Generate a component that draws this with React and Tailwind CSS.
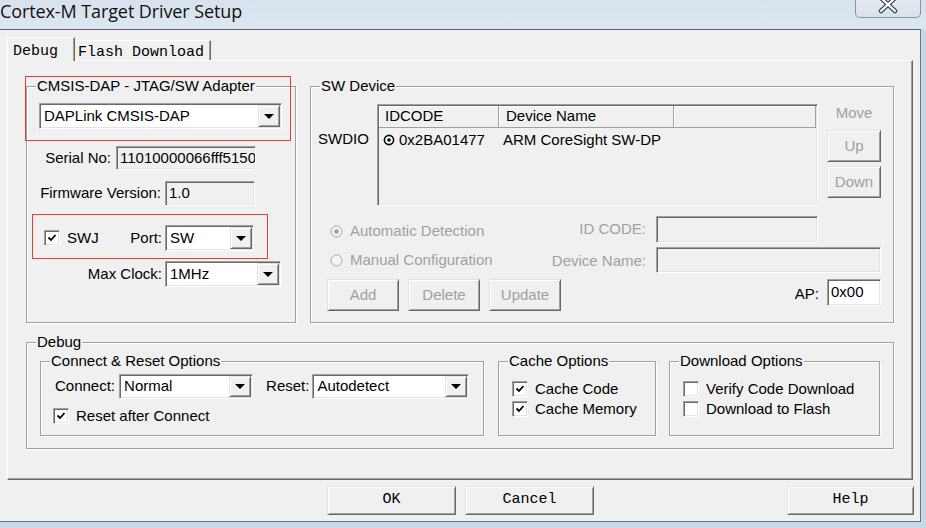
import React from "react";

const sunken =
  "border border-t-[#a0a0a0] border-l-[#a0a0a0] border-r-[#ffffff] border-b-[#ffffff] shadow-[inset_1px_1px_0_#696969,inset_-1px_-1px_0_#e3e3e3]";
const raised =
  "border border-t-[#e3e3e3] border-l-[#e3e3e3] border-r-[#696969] border-b-[#696969] shadow-[inset_1px_1px_0_#ffffff,inset_-1px_-1px_0_#a0a0a0]";

function Arrow() {
  return (
    <svg width="10" height="5" viewBox="0 0 10 5">
      <polygon points="0,0 10,0 5,5" fill="#000" />
    </svg>
  );
}

function Combo({ className, value }) {
  return (
    <div className={`${sunken} bg-white flex items-stretch p-[1px] ${className}`}>
      <div className="flex-1 pl-[3px] flex items-center whitespace-nowrap overflow-hidden">{value}</div>
      <div className={`${raised} w-[22px] bg-[#f0f0f0] flex items-center justify-center`}>
        <Arrow />
      </div>
    </div>
  );
}

function Field({ className, value, white }) {
  return (
    <div
      className={`${sunken} ${white ? "bg-white" : "bg-[#f0f0f0]"} flex items-center pl-[3px] whitespace-nowrap overflow-hidden ${className}`}
    >
      {value}
    </div>
  );
}

function Check({ checked }) {
  return (
    <div className={`w-[16px] h-[16px] shrink-0 bg-white ${sunken} flex items-center justify-center`}>
      {checked && (
        <svg width="10" height="10" viewBox="0 0 10 10">
          <path d="M1.5 4.5 L4 7 L8.5 2" stroke="#000" strokeWidth="1.8" fill="none" />
        </svg>
      )}
    </div>
  );
}

function Group({ label, className, children }) {
  return (
    <div className={`relative border border-[#a0a0a0] shadow-[1px_1px_0_#ffffff,inset_1px_1px_0_#ffffff] ${className}`}>
      <span className="absolute left-[9px] -top-[10px] px-[1px] bg-[#f0f0f0] leading-[18px] whitespace-nowrap">
        {label}
      </span>
      {children}
    </div>
  );
}

function Btn({ className, children, disabled }) {
  return (
    <div
      className={`${raised} bg-[#f0f0f0] flex items-center justify-center ${disabled ? "text-[#a0a0a0]" : ""} ${className}`}
    >
      {children}
    </div>
  );
}

function DisRadio({ checked }) {
  return (
    <svg width="13" height="13" viewBox="0 0 13 13" className="shrink-0">
      <circle cx="6.5" cy="6.5" r="5.5" fill="#f4f4f4" stroke="#a8a8a8" strokeWidth="1" />
      <path d="M2.6 10.4 A5.5 5.5 0 0 1 10.4 2.6" stroke="#c8c8c8" strokeWidth="1" fill="none" />
      {checked && <circle cx="6.5" cy="6.5" r="2.3" fill="#a0a0a0" />}
    </svg>
  );
}

export default function App() {
  return (
    <div className="w-[926px] h-[528px] overflow-hidden bg-[#c9d8e7] font-['Liberation_Sans',Arial,sans-serif] text-[15px] text-black flex flex-col">
      {/* title bar */}
      <div className="h-[29px] shrink-0 flex items-start justify-between bg-gradient-to-b from-[#d8e2ed] to-[#dde7f1]">
        <div className="font-['Open_Sans',sans-serif] text-[18px] leading-[22px] text-[#111] tracking-[-0.1px]">
          Cortex-M Target Driver Setup
        </div>
        <div className="mr-[5px] w-[66px] h-[18px] rounded-b-[5px] border border-t-0 border-[#8a95a2] bg-gradient-to-b from-[#e4eaf1] to-[#d9e1ea] flex items-start justify-center">
          <svg width="22" height="14" viewBox="0 0 22 14">
            <path d="M4 -2 L18 11 M18 -2 L4 11" stroke="#3b4654" strokeWidth="4.5" strokeLinecap="round" />
            <path d="M4 -2 L18 11 M18 -2 L4 11" stroke="#ffffff" strokeWidth="2.2" strokeLinecap="round" />
          </svg>
        </div>
      </div>

      {/* dialog body */}
      <div className="w-[921px] h-[493px] shrink-0 bg-[#f0f0f0] border-t border-r border-b border-t-[#5c6672] border-r-[#6d7781] border-b-[#6d7781] flex flex-col">
        {/* tabs */}
        <div className="mt-[7px] pl-[7px] h-[24px] flex items-end relative z-10 font-['Liberation_Mono',monospace]">
          <div className="h-[24px] w-[68px] bg-[#f0f0f0] border-l border-t border-r border-l-white border-t-white border-r-[#696969] shadow-[inset_-1px_0_0_#a0a0a0] flex items-start pt-[3px] pl-[5px]">
            Debug
          </div>
          <div className="h-[20px] w-[136px] mb-[1px] bg-[#f0f0f0] border-t border-r border-t-white border-r-[#696969] shadow-[inset_-1px_0_0_#a0a0a0] flex items-start pt-[1px] pl-[3px]">
            Flash Download
          </div>
        </div>

        {/* tab panel */}
        <div className="-mt-[1px] ml-[7px] w-[906px] h-[420px] border border-l-white border-t-white border-r-[#696969] border-b-[#696969] shadow-[inset_-1px_-1px_0_#a0a0a0] pl-[18px] pt-[25px] flex flex-col">
          <div className="flex">
            {/* adapter group */}
            <Group label="CMSIS-DAP - JTAG/SW Adapter" className="w-[270px] h-[237px] flex flex-col">
              <div className="absolute -left-[2px] -top-[11px] w-[266px] h-[65px] border border-[#f03a3a]" />
              <div className="absolute left-[5px] top-[127px] w-[236px] h-[45px] border border-[#f03a3a]" />
              <Combo className="ml-[12px] mt-[16px] w-[243px] h-[26px]" value="DAPLink CMSIS-DAP" />
              <div className="mt-[17px] h-[24px] flex items-center">
                <div className="w-[84px] text-right">Serial No:</div>
                <Field className="ml-[5px] w-[140px] h-[24px]" value="11010000066fff51500" />
              </div>
              <div className="mt-[11px] h-[25px] flex items-center">
                <div className="w-[134px] text-right">Firmware Version:</div>
                <Field className="ml-[4px] w-[90px] h-[25px]" value="1.0" />
              </div>
              <div className="mt-[19px] h-[26px] flex items-center">
                <div className="w-[135px] flex items-center">
                  <div className="ml-[17px]">
                    <Check checked />
                  </div>
                  <span className="ml-[7px]">SWJ</span>
                  <span className="ml-auto">Port:</span>
                </div>
                <Combo className="ml-[3px] w-[89px] h-[26px]" value="SW" />
              </div>
              <div className="mt-[10px] h-[26px] flex items-center">
                <div className="w-[135px] text-right">Max Clock:</div>
                <Combo className="ml-[3px] w-[116px] h-[26px]" value="1MHz" />
              </div>
            </Group>

            {/* SW device group */}
            <Group label="SW Device" className="ml-[14px] w-[584px] h-[237px] flex flex-col">
              <div className="mt-[17px] flex">
                <div className="w-[66px] pl-[7px] pt-[26px] leading-[18px]">SWDIO</div>
                <div className={`${sunken} w-[441px] h-[102px] bg-[#f0f0f0] p-[1px] flex flex-col`}>
                  <div className="h-[22px] flex shrink-0">
                    <div className="w-[120px] border-r border-b border-[#a0a0a0] shadow-[inset_1px_1px_0_#ffffff] pl-[6px] flex items-center">
                      IDCODE
                    </div>
                    <div className="w-[175px] border-r border-b border-[#a0a0a0] shadow-[inset_1px_1px_0_#ffffff] pl-[7px] flex items-center">
                      Device Name
                    </div>
                    <div className="w-[142px] border-r border-b border-[#a0a0a0] shadow-[inset_1px_1px_0_#ffffff]" />
                  </div>
                  <div className="h-[24px] flex items-center">
                    <svg width="12" height="12" viewBox="0 0 12 12" className="ml-[4px] shrink-0">
                      <circle cx="6" cy="6" r="4.6" stroke="#000" strokeWidth="1.6" fill="#fff" />
                      <circle cx="6" cy="6" r="1.8" fill="#000" />
                    </svg>
                    <span className="ml-[4px] w-[102px]">0x2BA01477</span>
                    <span className="ml-[2px]">ARM CoreSight SW-DP</span>
                  </div>
                </div>
                <div className="ml-[9px] w-[54px] flex flex-col">
                  <div className="leading-[18px] text-center text-[#a0a0a0]">Move</div>
                  <Btn className="mt-[8px] h-[32px]" disabled>
                    Up
                  </Btn>
                  <Btn className="mt-[4px] h-[32px]" disabled>
                    Down
                  </Btn>
                </div>
              </div>

              <div className="mt-[10px] h-[27px] flex items-center pr-[75px] text-[#a0a0a0]">
                <div className="ml-[19px] flex items-center mt-[3px]">
                  <DisRadio checked />
                  <span className="ml-[7px]">Automatic Detection</span>
                </div>
                <div className="flex-1 text-right">ID CODE:</div>
                <Field className="ml-[10px] w-[162px] h-[27px]" value="" />
              </div>
              <div className="mt-[4px] h-[26px] flex items-center pr-[12px] text-[#a0a0a0]">
                <div className="ml-[19px] flex items-center">
                  <DisRadio />
                  <span className="ml-[7px]">Manual Configuration</span>
                </div>
                <div className="flex-1 text-right mt-[3px]">Device Name:</div>
                <Field className="ml-[10px] w-[225px] h-[26px]" value="" />
              </div>
              <div className="mt-[6px] h-[32px] flex items-start pr-[12px]">
                <Btn className="ml-[16px] w-[72px] h-[32px]" disabled>
                  Add
                </Btn>
                <Btn className="ml-[9px] w-[72px] h-[32px]" disabled>
                  Delete
                </Btn>
                <Btn className="ml-[9px] w-[72px] h-[32px]" disabled>
                  Update
                </Btn>
                <div className="flex-1 text-right pt-[4px]">AP:</div>
                <Field className="ml-[8px] w-[54px] h-[27px]" value="0x00" white />
              </div>
            </Group>
          </div>

          {/* debug group */}
          <Group label="Debug" className="mt-[19px] w-[868px] h-[107px]">
            <div className="mt-[18px] ml-[13px] flex">
              <Group label="Connect & Reset Options" className="w-[444px] h-[75px] flex flex-col">
                <div className="mt-[12px] h-[25px] flex items-center">
                  <span className="ml-[14px]">Connect:</span>
                  <Combo className="ml-[4px] w-[134px] h-[25px]" value="Normal" />
                  <span className="ml-[13px]">Reset:</span>
                  <Combo className="ml-[3px] w-[157px] h-[25px]" value="Autodetect" />
                </div>
                <div className="mt-[8px] flex items-center h-[18px]">
                  <div className="ml-[12px]">
                    <Check checked />
                  </div>
                  <span className="ml-[7px]">Reset after Connect</span>
                </div>
              </Group>
              <Group label="Cache Options" className="ml-[14px] w-[158px] h-[75px] flex flex-col">
                <div className="mt-[18px] ml-[13px] flex items-center h-[18px]">
                  <Check checked />
                  <span className="ml-[7px]">Cache Code</span>
                </div>
                <div className="mt-[2px] ml-[13px] flex items-center h-[18px]">
                  <Check checked />
                  <span className="ml-[7px]">Cache Memory</span>
                </div>
              </Group>
              <Group label="Download Options" className="ml-[13px] w-[211px] h-[75px] flex flex-col">
                <div className="mt-[18px] ml-[13px] flex items-center h-[18px]">
                  <Check />
                  <span className="ml-[7px]">Verify Code Download</span>
                </div>
                <div className="mt-[2px] ml-[13px] flex items-center h-[18px]">
                  <Check />
                  <span className="ml-[7px]">Download to Flash</span>
                </div>
              </Group>
            </div>
          </Group>
        </div>

        {/* bottom buttons */}
        <div className="mt-[6px] flex font-['Liberation_Mono',monospace]">
          <Btn className="ml-[327px] w-[129px] h-[29px]">OK</Btn>
          <Btn className="ml-[9px] w-[129px] h-[29px]">Cancel</Btn>
          <Btn className="ml-[193px] w-[127px] h-[29px]">Help</Btn>
        </div>
      </div>
    </div>
  );
}
